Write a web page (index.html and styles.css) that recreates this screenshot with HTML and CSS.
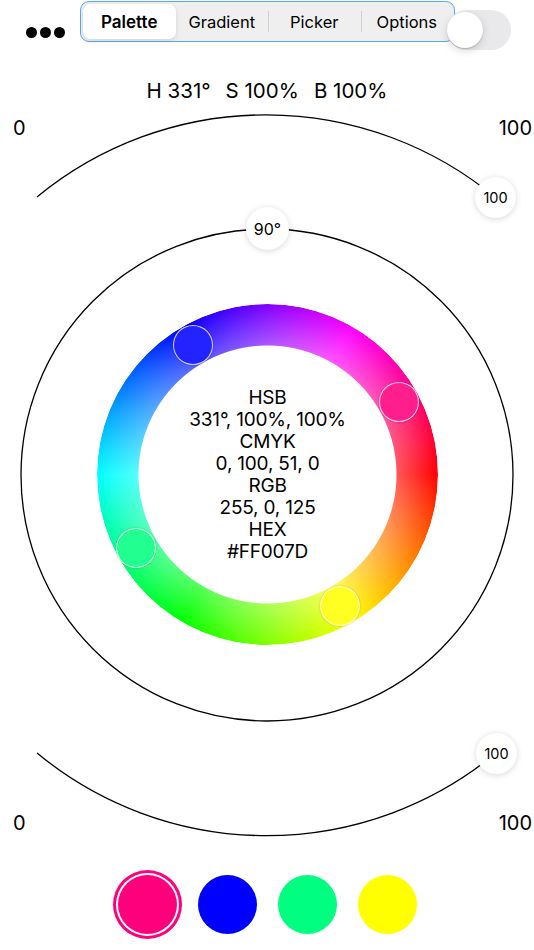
FILE: index.html
```html
<!DOCTYPE html>
<html>
<head>
<meta charset="utf-8">
<link rel="stylesheet" href="styles.css">
</head>
<body>
<div class="app">
  <header class="topbar">
    <div class="more"><span></span><span></span><span></span></div>
    <div class="segmented">
      <div class="seg selected">Palette</div>
      <div class="seg">Gradient</div>
      <div class="seg sep">Picker</div>
      <div class="seg sep">Options</div>
    </div>
    <div class="toggle"><div class="toggle-knob"></div></div>
  </header>

  <div class="readout">
    <span>H 331°</span><span>S 100%</span><span>B 100%</span>
  </div>

  <div class="dial">
    <svg class="dial-lines" width="534" height="740" viewBox="0 0 534 740">
      <path d="M37 87 A360 360 0 0 1 496 88" fill="none" stroke="#000" stroke-width="1.3"/>
      <path d="M37 643 A360 360 0 0 0 496 643" fill="none" stroke="#000" stroke-width="1.3"/>
      <circle cx="267" cy="365" r="246" fill="none" stroke="#000" stroke-width="1.3"/>
    </svg>

    <span class="scale-label tl">0</span>
    <span class="scale-label tr">100</span>
    <span class="scale-label bl">0</span>
    <span class="scale-label br">100</span>

    <div class="value-knob vk-top">100</div>
    <div class="value-knob vk-bottom">100</div>
    <div class="angle-knob">90°</div>

    <div class="wheel"></div>

    <div class="wheel-info">
      <div>HSB</div>
      <div>331°, 100%, 100%</div>
      <div>CMYK</div>
      <div>0, 100, 51, 0</div>
      <div>RGB</div>
      <div>255, 0, 125</div>
      <div>HEX</div>
      <div>#FF007D</div>
    </div>

    <div class="hue-knob hk-pink"></div>
    <div class="hue-knob hk-blue"></div>
    <div class="hue-knob hk-green"></div>
    <div class="hue-knob hk-yellow"></div>
  </div>

  <div class="swatches">
    <div class="swatch sw-pink selected"></div>
    <div class="swatch sw-blue"></div>
    <div class="swatch sw-green"></div>
    <div class="swatch sw-yellow"></div>
  </div>
</div>
</body>
</html>
```

FILE: styles.css
```css
* { box-sizing: border-box; }

html, body {
  margin: 0;
  padding: 0;
  background: #fff;
}

body {
  font-family: "Inter", "Liberation Sans", sans-serif;
  color: #000;
  width: 534px;
  height: 950px;
  overflow: hidden;
}

.topbar {
  display: flex;
  align-items: flex-start;
  height: 52px;
  padding-left: 26px;
}

.more {
  display: flex;
  gap: 3px;
  margin-top: 27px;
  margin-right: 15px;
}

.more span {
  width: 11px;
  height: 11px;
  border-radius: 50%;
  background: #000;
}

.segmented {
  display: flex;
  width: 375px;
  height: 41px;
  margin-top: 1px;
  padding: 1px;
  border: 1px solid #59a8f6;
  border-radius: 9px;
  background: #efeff0;
}

.seg {
  flex: 1;
  display: flex;
  align-items: center;
  justify-content: center;
  font-size: 16.5px;
  font-weight: 400;
  position: relative;
}

.seg.selected {
  background: #fff;
  border-radius: 7px;
  font-weight: 600;
  font-size: 17px;
  margin: 1px 0 1px 1px;
  box-shadow: 0 2px 5px rgba(0, 0, 0, 0.1), 0 0 1px rgba(0, 0, 0, 0.08);
}

.seg.sep::before {
  content: "";
  position: absolute;
  left: 0;
  top: 8px;
  bottom: 8px;
  width: 1px;
  background: #cfcfd2;
}

.toggle {
  width: 64px;
  height: 40px;
  margin-left: -8px;
  margin-top: 10px;
  border-radius: 20px;
  background: #e9e9eb;
  padding: 2px 0 0 0;
}

.toggle-knob {
  width: 36px;
  height: 36px;
  border-radius: 50%;
  background: #fff;
  box-shadow: 0 3px 8px rgba(0, 0, 0, 0.15), 0 1px 1px rgba(0, 0, 0, 0.16);
}

.readout {
  display: flex;
  justify-content: center;
  gap: 15px;
  padding-top: 27px;
  font-size: 20.5px;
  line-height: 24px;
  height: 51px;
}

.dial {
  position: relative;
  width: 534px;
  height: 740px;
  margin-top: 7px;
}

.dial-lines {
  position: absolute;
  left: 0;
  top: 0;
}

.scale-label {
  position: absolute;
  font-size: 20px;
  line-height: 24px;
}
.scale-label.tl { left: 13px; top: 6px; }
.scale-label.tr { right: 2px; top: 6px; }
.scale-label.bl { left: 13px; top: 701px; }
.scale-label.br { right: 2px; top: 701px; }

.value-knob,
.angle-knob {
  position: absolute;
  display: flex;
  align-items: center;
  justify-content: center;
  border-radius: 50%;
  background: #fff;
  box-shadow: 0 1px 6px rgba(0, 0, 0, 0.16);
}

.value-knob {
  width: 41px;
  height: 41px;
  font-size: 14.5px;
}
.vk-top { left: 475px; top: 67px; }
.vk-bottom { left: 476px; top: 623px; }

.angle-knob {
  width: 43px;
  height: 43px;
  left: 246px;
  top: 97px;
  font-size: 16px;
}

.wheel {
  position: absolute;
  left: 97px;
  top: 194px;
  width: 341px;
  height: 341px;
  border-radius: 50%;
  background:
    radial-gradient(circle closest-side, rgba(255, 255, 255, 0.35) 75%, rgba(255, 255, 255, 0) 100%),
    conic-gradient(from 90deg, #ff0000, #ffff00, #00ff00, #00ffff, #0000ff, #ff00ff, #ff0000);
  -webkit-mask: radial-gradient(circle closest-side, transparent 128.5px, #000 129.5px);
  mask: radial-gradient(circle closest-side, transparent 128.5px, #000 129.5px);
}

.wheel-info {
  position: absolute;
  left: 138px;
  top: 276px;
  width: 259px;
  height: 178px;
  display: flex;
  flex-direction: column;
  align-items: center;
  justify-content: center;
  font-size: 19px;
  line-height: 22px;
  letter-spacing: -0.2px;
}

.hue-knob {
  position: absolute;
  width: 40px;
  height: 40px;
  border-radius: 50%;
  border: 1.5px solid rgba(255, 255, 255, 0.8);
  box-shadow: 0 0 2px rgba(0, 0, 0, 0.25);
}
.hk-pink   { left: 378.7px; top: 272.3px; background: #ff1f8c; }
.hk-blue   { left: 172.5px; top: 215.1px; background: #2323ff; }
.hk-green  { left: 116.3px; top: 417.7px; background: #22ff91; }
.hk-yellow { left: 320.2px; top: 476.2px; background: #ffff22; }

.swatches {
  display: flex;
  justify-content: center;
  gap: 21px;
  padding-top: 25px;
}

.swatch {
  width: 59px;
  height: 59px;
  border-radius: 50%;
}
.swatch.selected {
  box-shadow: 0 0 0 2px #fff, 0 0 0 5px #ff007d;
}
.sw-pink { background: #ff007d; }
.sw-blue { background: #0000ff; }
.sw-green { background: #00ff80; }
.sw-yellow { background: #ffff00; }
```
